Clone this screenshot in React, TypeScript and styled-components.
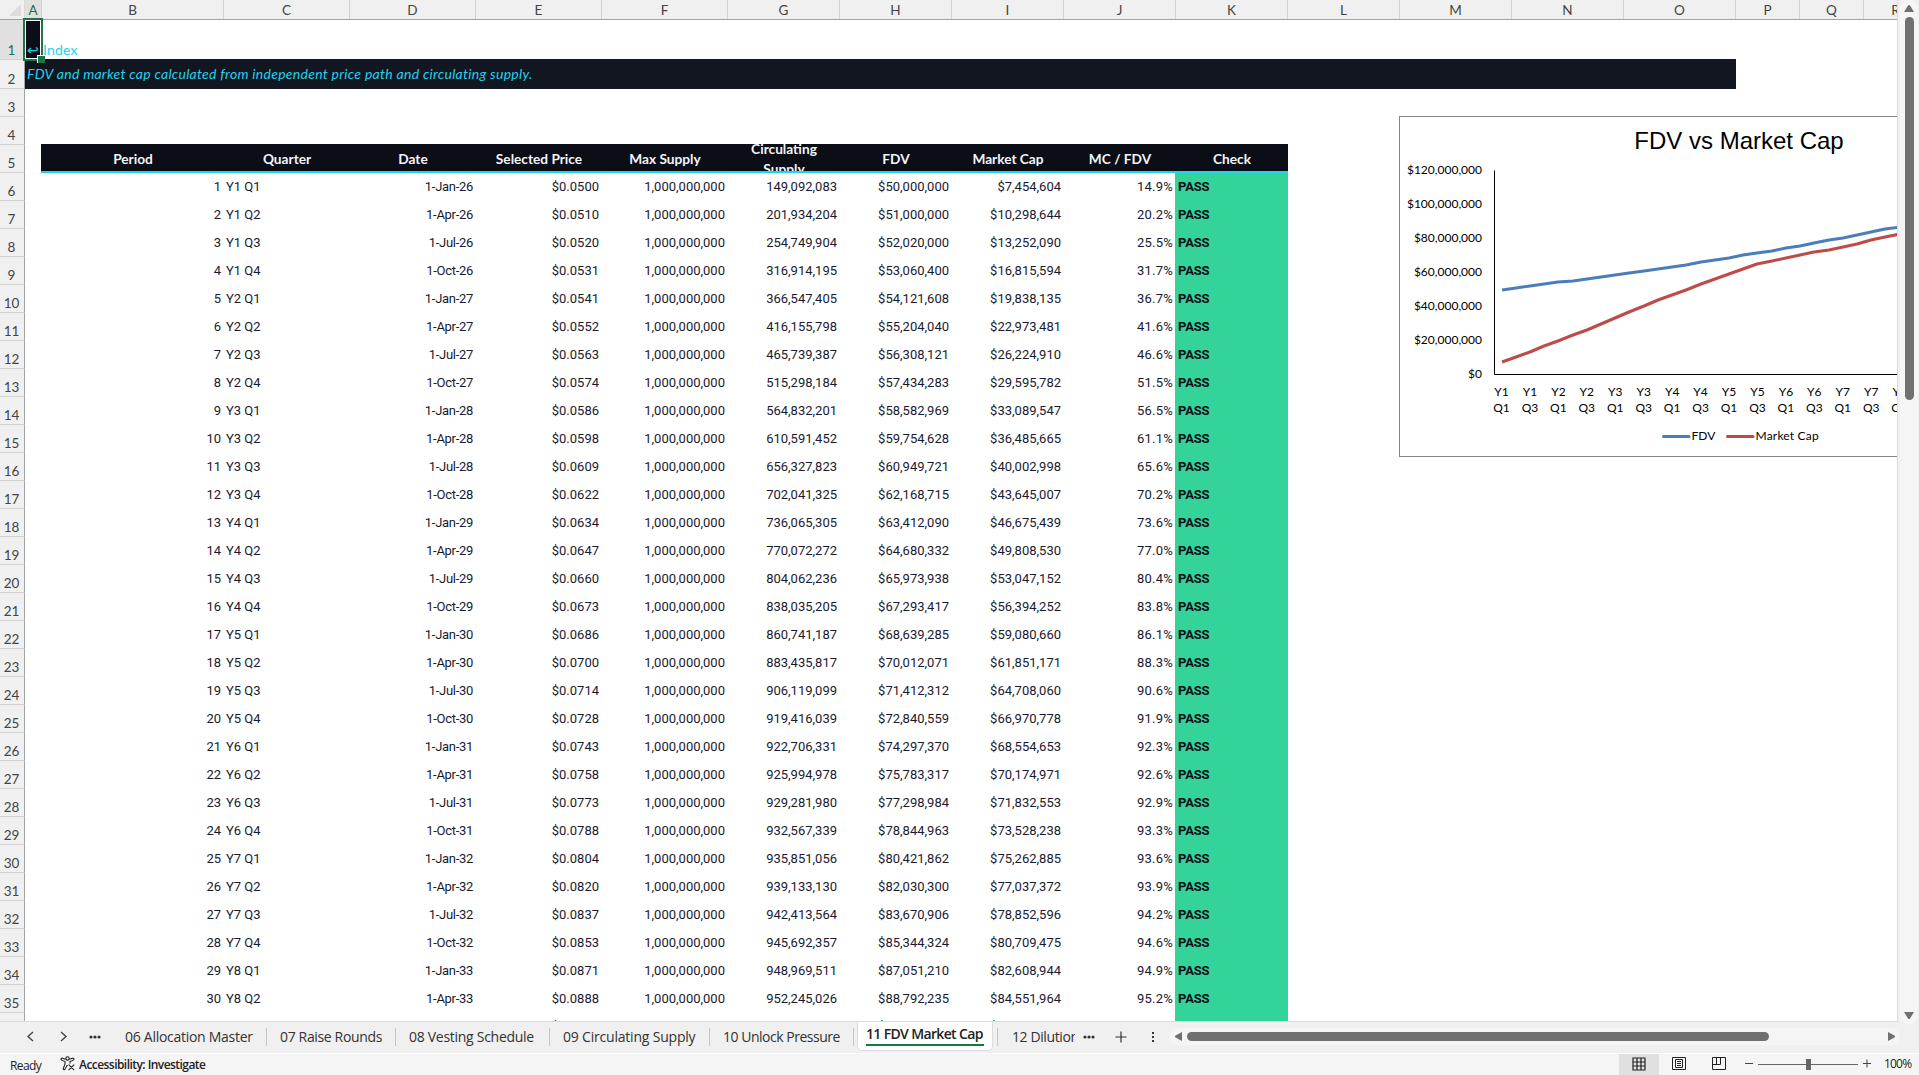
import { FC } from "react";
import styled, { createGlobalStyle, css } from "styled-components";

const GlobalStyle = createGlobalStyle`
  * {
    box-sizing: border-box;
  }
  body {
    margin: 0;
    overflow: hidden;
    background: #f0f0f0;
  }
`;

const calibri = `Lato, "Liberation Sans", sans-serif`;
const body = `Roboto, "Liberation Sans", sans-serif`;
const segoe = `"Open Sans", "Noto Sans", sans-serif`;

const Window = styled.div`
  width: 1919px;
  height: 1075px;
  display: flex;
  flex-direction: column;
  background: #f0f0f0;
`;

const Main = styled.div`
  display: flex;
  height: 1022px;
`;

const Sheet = styled.div`
  position: relative;
  width: 1898px;
  height: 1022px;
  overflow: hidden;
  background: #fff;
  border-right: 1px solid #dcdcdc;
  border-bottom: 1px solid #dcdcdc;
`;

const HeadRow = styled.div`
  display: flex;
  width: 2000px;
  height: 20px;
  background: #f0f0f0;
  border-bottom: 1px solid #a3a3a3;
`;

const Corner = styled.div`
  width: 25px;
  padding: 4px 0 0 9px;
  border-right: 1px solid #dadada;
  svg {
    display: block;
  }
`;

const ColHead = styled.div<{ $width: number; $active?: boolean }>`
  flex: none;
  width: ${({ $width }) => $width}px;
  height: 19px;
  font: 13.5px/20px ${calibri};
  text-align: center;
  color: ${({ $active }) => ($active ? "#1e7145" : "#444")};
  background: ${({ $active }) => ($active ? "#e0e0e0" : "transparent")};
  border-right: 1px solid #d2d2d2;
`;

const Row = styled.div<{ $height: number }>`
  display: flex;
  width: 2000px;
  height: ${({ $height }) => $height}px;
`;

const RowHead = styled.div<{ $active?: boolean }>`
  flex: none;
  display: flex;
  align-items: flex-end;
  justify-content: center;
  width: 25px;
  padding: 0 1px 1px 0;
  font: 13.5px/16px ${calibri};
  color: ${({ $active }) => ($active ? "#1e7145" : "#444")};
  background: ${({ $active }) => ($active ? "#e0e0e0" : "#f0f0f0")};
  border-right: 1px solid #a3a3a3;
  border-bottom: 1px solid #d2d2d2;
`;

const Spacer = styled.div`
  flex: none;
  width: 17px;
`;

const LinkArrow = styled.div`
  flex: none;
  width: 17px;
  padding: 22px 0 0 2px;
  font: 14px/16px "DejaVu Sans", sans-serif;
  color: #22d3ee;
  background: #0b0d17;
`;

const LinkText = styled.div`
  padding: 20px 0 0 1px;
  font: 14px/20px ${calibri};
  letter-spacing: 0.2px;
  color: #22d3ee;
`;

const Banner = styled.div`
  flex: none;
  width: 1711px;
  height: 30px;
  margin-top: -1px;
  padding-left: 2px;
  font: italic 14px/30px ${calibri};
  letter-spacing: 0.28px;
  color: #22d3ee;
  background: #111620;
`;

const TableHead = styled.div`
  display: flex;
  height: 29px;
  margin: -1px 0 0 -1px;
  padding-left: 1px;
  background: #0b0d17;
  border-bottom: 2px solid #22d3ee;
  overflow: hidden;
`;

const TableHeadCell = styled.div<{ $width: number }>`
  display: flex;
  flex: none;
  align-items: center;
  justify-content: center;
  width: ${({ $width }) => $width}px;
  padding: 3px 16px 0;
  font: bold 13.7px/20px ${calibri};
  text-align: center;
  color: #f1f5f9;
`;

const Cell = styled.div<{ $width: number; $left?: boolean; $spacing?: number }>`
  flex: none;
  width: ${({ $width }) => $width}px;
  padding: 0 3px 0 2px;
  font: 13px/27px ${body};
  letter-spacing: ${({ $spacing = 0 }) => $spacing}px;
  text-align: ${({ $left }) => ($left ? "left" : "right")};
  white-space: nowrap;
  color: #1a1a2e;
`;

const CheckCell = styled(Cell)`
  margin-left: -1px;
  padding-left: 3px;
  font-weight: bold;
  color: #0b0d17;
  background: #34d399;
`;

const Selection = styled.div`
  position: absolute;
  left: 23px;
  top: 18px;
  width: 20px;
  height: 43px;
  border: 2px solid #217346;
  box-shadow: inset 0 0 0 1px #fff;
  &::after {
    content: "";
    position: absolute;
    right: -4px;
    bottom: -4px;
    width: 7px;
    height: 7px;
    background: #217346;
    border: 1px solid #fff;
    border-right: 0;
    border-bottom: 0;
  }
`;

const ChartBox = styled.div`
  position: absolute;
  left: 1399px;
  top: 116px;
  width: 680px;
  height: 341px;
  background: #fff;
  border: 1px solid #868686;
  svg {
    display: block;
  }
`;

const VScroll = styled.div`
  display: flex;
  flex-direction: column;
  align-items: center;
  width: 18px;
  height: 1024px;
  margin-left: 2px;
  padding: 5px 0;
  background: #f5f5f5;
  border-radius: 9px;
`;

const VThumb = styled.div`
  width: 9px;
  height: 383px;
  margin: 5px 0 auto;
  background: #707070;
  border-radius: 5px;
`;

const TabBar = styled.div`
  display: flex;
  height: 31px;
  color: #333;
`;

const TabNav = styled.div`
  display: flex;
  align-items: center;
  width: 112px;
  height: 29px;
  padding-left: 26px;
  gap: 25px;
  svg {
    display: block;
  }
  svg:last-child {
    margin-left: -3px;
  }
`;

const divider = css`
  &::after {
    content: "";
    width: 1px;
    height: 18px;
    margin-top: 6px;
    background: #c6c6c6;
  }
`;

const Tab = styled.div<{ $width: number; $spacing: number }>`
  display: flex;
  flex: none;
  justify-content: space-between;
  width: ${({ $width }) => $width}px;
  padding-left: 13px;
  font: 14px/30px ${segoe};
  letter-spacing: ${({ $spacing }) => $spacing}px;
  white-space: nowrap;
  ${divider}
`;

const ActiveTab = styled.div`
  flex: none;
  width: 136px;
  height: 30px;
  margin: -1px 4px 0 3px;
  padding: 3px 8px 0;
  background: #fff;
  border: 1px solid #dcdcdc;
  border-top: 0;
  border-radius: 0 0 5px 5px;
`;

const ActiveLabel = styled.div`
  height: 22px;
  font: 600 14px/20px ${segoe};
  letter-spacing: -0.65px;
  white-space: nowrap;
  color: #222;
  border-bottom: 2px solid #107c41;
`;

const ClippedTab = styled.div`
  width: 77px;
  padding-left: 14px;
  font: 14px/30px ${segoe};
  letter-spacing: -0.4px;
  white-space: nowrap;
  overflow: hidden;
`;

const TabActions = styled.div`
  display: flex;
  align-items: center;
  width: 95px;
  height: 29px;
  padding-left: 8px;
  gap: 20px;
`;

const TabEdge = styled.div`
  width: 1px;
  height: 18px;
  margin-top: 6px;
  background: #c6c6c6;
`;

const HScroll = styled.div`
  display: flex;
  align-items: center;
  width: 730px;
  height: 17px;
  margin-top: 6px;
  padding: 0 5px;
  background: #f5f5f5;
  border-radius: 9px;
`;

const HThumb = styled.div`
  width: 582px;
  height: 9px;
  margin: 0 auto 0 5px;
  background: #707070;
  border-radius: 5px;
`;

const StatusBar = styled.div`
  display: flex;
  height: 22px;
  background: #f5f5f5;
  border-top: 1px solid #fff;
  color: #222;
`;

const Ready = styled.div`
  width: 60px;
  padding-left: 10px;
  font: 12px/23px ${segoe};
  letter-spacing: -0.6px;
`;

const Accessibility = styled.div`
  display: flex;
  align-items: flex-start;
  gap: 4px;
  width: 1559px;
  padding-top: 2px;
  font: 600 12px/17px ${segoe};
  letter-spacing: -0.55px;
`;

const ViewButton = styled.div<{ $active?: boolean }>`
  display: flex;
  justify-content: center;
  width: 40px;
  padding-top: 3px;
  background: ${({ $active }) => ($active ? "#e0e0e0" : "transparent")};
`;

const Zoom = styled.div`
  display: flex;
  align-items: flex-start;
  padding-left: 5px;
`;

const ZoomValue = styled.div`
  padding-left: 12px;
  font: 12px/20px ${segoe};
  letter-spacing: -0.8px;
`;

const columns: [string, number][] = [
  ["A", 17],
  ["B", 182],
  ["C", 126],
  ["D", 126],
  ["E", 126],
  ["F", 126],
  ["G", 112],
  ["H", 112],
  ["I", 112],
  ["J", 112],
  ["K", 112],
  ["L", 112],
  ["M", 112],
  ["N", 112],
  ["O", 112],
  ["P", 64],
  ["Q", 64],
  ["R", 64],
];

const headings = [
  "Period",
  "Quarter",
  "Date",
  "Selected Price",
  "Max Supply",
  "Circulating Supply",
  "FDV",
  "Market Cap",
  "MC / FDV",
  "Check",
];

// price, circulating supply, fdv, market cap, mc / fdv
const values: [string, number, number, number, string][] = [
  ["0.0500", 149092083, 50000000, 7454604, "14.9"],
  ["0.0510", 201934204, 51000000, 10298644, "20.2"],
  ["0.0520", 254749904, 52020000, 13252090, "25.5"],
  ["0.0531", 316914195, 53060400, 16815594, "31.7"],
  ["0.0541", 366547405, 54121608, 19838135, "36.7"],
  ["0.0552", 416155798, 55204040, 22973481, "41.6"],
  ["0.0563", 465739387, 56308121, 26224910, "46.6"],
  ["0.0574", 515298184, 57434283, 29595782, "51.5"],
  ["0.0586", 564832201, 58582969, 33089547, "56.5"],
  ["0.0598", 610591452, 59754628, 36485665, "61.1"],
  ["0.0609", 656327823, 60949721, 40002998, "65.6"],
  ["0.0622", 702041325, 62168715, 43645007, "70.2"],
  ["0.0634", 736065305, 63412090, 46675439, "73.6"],
  ["0.0647", 770072272, 64680332, 49808530, "77.0"],
  ["0.0660", 804062236, 65973938, 53047152, "80.4"],
  ["0.0673", 838035205, 67293417, 56394252, "83.8"],
  ["0.0686", 860741187, 68639285, 59080660, "86.1"],
  ["0.0700", 883435817, 70012071, 61851171, "88.3"],
  ["0.0714", 906119099, 71412312, 64708060, "90.6"],
  ["0.0728", 919416039, 72840559, 66970778, "91.9"],
  ["0.0743", 922706331, 74297370, 68554653, "92.3"],
  ["0.0758", 925994978, 75783317, 70174971, "92.6"],
  ["0.0773", 929281980, 77298984, 71832553, "92.9"],
  ["0.0788", 932567339, 78844963, 73528238, "93.3"],
  ["0.0804", 935851056, 80421862, 75262885, "93.6"],
  ["0.0820", 939133130, 82030300, 77037372, "93.9"],
  ["0.0837", 942413564, 83670906, 78852596, "94.2"],
  ["0.0853", 945692357, 85344324, 80709475, "94.6"],
  ["0.0871", 948969511, 87051210, 82608944, "94.9"],
  ["0.0888", 952245026, 88792235, 84551964, "95.2"],
  ["0.0906", 955518903, 90568080, 86539512, "95.6"],
];

const months = ["Jan", "Apr", "Jul", "Oct"];
const quarter = (i: number) => [`Y${Math.floor(i / 4) + 1}`, `Q${(i % 4) + 1}`];
const widths = columns.slice(1, 11).map(([, width]) => width);

const chartX = (i: number) => 101.5 + i * 14.22;
const chartY = (value: number) => 257.5 - (value / 1000000) * 1.7;
// points sit on whole pixels
const line = (index: 2 | 3) =>
  values.map((row, i) => `${Math.round(chartX(i))},${Math.round(chartY(row[index]))}`).join(" ");

const Chart: FC = () => (
  <ChartBox>
    <svg width="678" height="339" fontFamily={calibri} fontSize="12" fill="#000">
      <text x="339" y="32" fontSize="24" textAnchor="middle" fontFamily="Liberation Sans, sans-serif">
        FDV vs Market Cap
      </text>
      {[120, 100, 80, 60, 40, 20, 0].map((m) => (
        <text key={m} x="82" y={chartY(m * 1000000) + 3.5} textAnchor="end">
          ${(m * 1000000).toLocaleString("en-US")}
        </text>
      ))}
      <path d="M94.5 53.5V257.5H678" fill="none" stroke="#000" />
      <polyline points={line(2)} fill="none" stroke="#4a7ebb" strokeWidth="3" strokeLinejoin="round" />
      <polyline points={line(3)} fill="none" stroke="#be4b48" strokeWidth="3" strokeLinejoin="round" />
      {values.map((_, i) =>
        i % 2 === 0 ? (
          <g key={i} textAnchor="middle">
            <text x={chartX(i)} y="279">
              {quarter(i)[0]}
            </text>
            <text x={chartX(i)} y="295">
              {quarter(i)[1]}
            </text>
          </g>
        ) : null
      )}
      <path d="M263.5 319.5H289" stroke="#4a7ebb" strokeWidth="3" strokeLinecap="round" />
      <text x="291.5" y="323">
        FDV
      </text>
      <path d="M327.5 319.5H353" stroke="#be4b48" strokeWidth="3" strokeLinecap="round" />
      <text x="355.5" y="323" letterSpacing="0.2">
        Market Cap
      </text>
    </svg>
  </ChartBox>
);

const Dots: FC = () => (
  <svg width="12" height="4" fill="#333">
    <circle cx="2" cy="2" r="1.6" />
    <circle cx="6" cy="2" r="1.6" />
    <circle cx="10" cy="2" r="1.6" />
  </svg>
);

const App: FC = () => {
  return (
    <Window>
      <GlobalStyle />
      <Main>
        <Sheet>
          <HeadRow>
            <Corner>
              <svg width="12" height="12">
                <path d="M12 0V12H0Z" fill="#dcdcdc" />
              </svg>
            </Corner>
            {columns.map(([name, width]) => (
              <ColHead key={name} $width={width} $active={name === "A"}>
                {name}
              </ColHead>
            ))}
          </HeadRow>
          <Row $height={40}>
            <RowHead $active>1</RowHead>
            <LinkArrow>↩</LinkArrow>
            <LinkText>Index</LinkText>
          </Row>
          <Row $height={29}>
            <RowHead>2</RowHead>
            <Banner>FDV and market cap calculated from independent price path and circulating supply.</Banner>
          </Row>
          <Row $height={28}>
            <RowHead>3</RowHead>
          </Row>
          <Row $height={28}>
            <RowHead>4</RowHead>
          </Row>
          <Row $height={28}>
            <RowHead>5</RowHead>
            <Spacer />
            <TableHead>
              {headings.map((heading, i) => (
                <TableHeadCell key={heading} $width={widths[i]}>
                  {heading}
                </TableHeadCell>
              ))}
            </TableHead>
          </Row>
          {values.map(([price, supply, fdv, cap, ratio], i) => (
            <Row key={i} $height={28}>
              <RowHead>{i + 6}</RowHead>
              <Spacer />
              <Cell $width={182}>{i + 1}</Cell>
              <Cell $width={126} $left>
                {quarter(i).join(" ")}
              </Cell>
              <Cell $width={126} $spacing={-0.3}>{`1-${months[i % 4]}-${26 + Math.floor(i / 4)}`}</Cell>
              <Cell $width={126}>${price}</Cell>
              <Cell $width={126}>1,000,000,000</Cell>
              <Cell $width={112}>{supply.toLocaleString("en-US")}</Cell>
              <Cell $width={112}>${fdv.toLocaleString("en-US")}</Cell>
              <Cell $width={112}>${cap.toLocaleString("en-US")}</Cell>
              <Cell $width={112} $spacing={0.2}>
                {ratio}%
              </Cell>
              <CheckCell $width={113} $left $spacing={-0.2}>
                PASS
              </CheckCell>
            </Row>
          ))}
          <Chart />
          <Selection />
        </Sheet>
        <VScroll>
          <svg width="10" height="7">
            <path d="M4 .5Q5 -.5 6 .5L10 7H0Z" fill="#707070" />
          </svg>
          <VThumb />
          <svg width="10" height="7">
            <path d="M4 6.5Q5 7.5 6 6.5L10 0H0Z" fill="#707070" />
          </svg>
        </VScroll>
      </Main>
      <TabBar>
        <TabNav>
          <svg width="8" height="11" fill="none" stroke="#444" strokeWidth="1.4">
            <path d="M7 1L2 5.5L7 10" />
          </svg>
          <svg width="8" height="11" fill="none" stroke="#444" strokeWidth="1.4">
            <path d="M2 1L7 5.5L2 10" />
          </svg>
          <Dots />
        </TabNav>
        <Tab $width={155} $spacing={-0.28}>
          06 Allocation Master
        </Tab>
        <Tab $width={129} $spacing={-0.35}>
          07 Raise Rounds
        </Tab>
        <Tab $width={154} $spacing={-0.28}>
          08 Vesting Schedule
        </Tab>
        <Tab $width={160} $spacing={-0.2}>
          09 Circulating Supply
        </Tab>
        <Tab $width={144} $spacing={-0.48}>
          10 Unlock Pressure
        </Tab>
        <ActiveTab>
          <ActiveLabel>11 FDV Market Cap</ActiveLabel>
        </ActiveTab>
        <TabEdge />
        <ClippedTab>12 Dilution</ClippedTab>
        <TabActions>
          <Dots />
          <svg width="12" height="12" stroke="#333" strokeWidth="1.2">
            <path d="M6 0.5V11.5M0.5 6H11.5" />
          </svg>
          <svg width="13" height="12" fill="#333">
            <path d="M5 1h2v2H5zM5 5h2v2H5zM5 9h2v2H5z" />
          </svg>
        </TabActions>
        <HScroll>
          <svg width="7" height="9">
            <path d="M.5 3.6Q-.5 4.5 .5 5.4L7 9V0Z" fill="#707070" />
          </svg>
          <HThumb />
          <svg width="7" height="9">
            <path d="M6.5 3.6Q7.5 4.5 6.5 5.4L0 9V0Z" fill="#707070" />
          </svg>
        </HScroll>
      </TabBar>
      <StatusBar>
        <Ready>Ready</Ready>
        <Accessibility>
          <svg width="15" height="15" fill="none" stroke="#222" strokeWidth="1.1">
            <circle cx="7.5" cy="2.4" r="1.7" />
            <path d="M5.6 3.2L2.6 2.2Q1 2 1 3.3Q1 4.2 5 5.6V8.2L3.2 12.6Q3.4 14.2 4.8 13.4L7 9.5H7.8M9.4 3.2L12.4 2.2Q14 2 14 3.3Q14 4.2 10 5.6V7.4M8.6 8.6L14.2 14.2M14.2 8.6L8.6 14.2" />
          </svg>
          Accessibility: Investigate
        </Accessibility>
        <ViewButton $active>
          <svg width="14" height="14" fill="none" stroke="#222" strokeWidth="1.2">
            <path d="M1 1H13V13H1ZM5 1V13M9 1V13M1 5H13M1 9H13" />
          </svg>
        </ViewButton>
        <ViewButton>
          <svg width="14" height="14" fill="none" stroke="#222">
            <path d="M.5 .5H13.5V12.5H.5ZM3.5 2.5H10.5V10.5H3.5ZM5 4.5H9M5 6.5H9M5 8.5H9" />
          </svg>
        </ViewButton>
        <ViewButton>
          <svg width="14" height="14" fill="none" stroke="#222">
            <path d="M.5 .5H13.5V12.5H.5ZM.5 7.5H8.5V.5M4.5 .5V7.5" />
          </svg>
        </ViewButton>
        <Zoom>
          <svg width="128" height="20" stroke="#444">
            <path d="M1 9.5H9M119 9.5H127M123 5.5V13.5" />
            <path d="M14 10.5H114" stroke="#666" />
            <path d="M62 5H67V16H62Z" fill="#666" stroke="none" />
          </svg>
          <ZoomValue>100%</ZoomValue>
        </Zoom>
      </StatusBar>
    </Window>
  );
};

export default App;
